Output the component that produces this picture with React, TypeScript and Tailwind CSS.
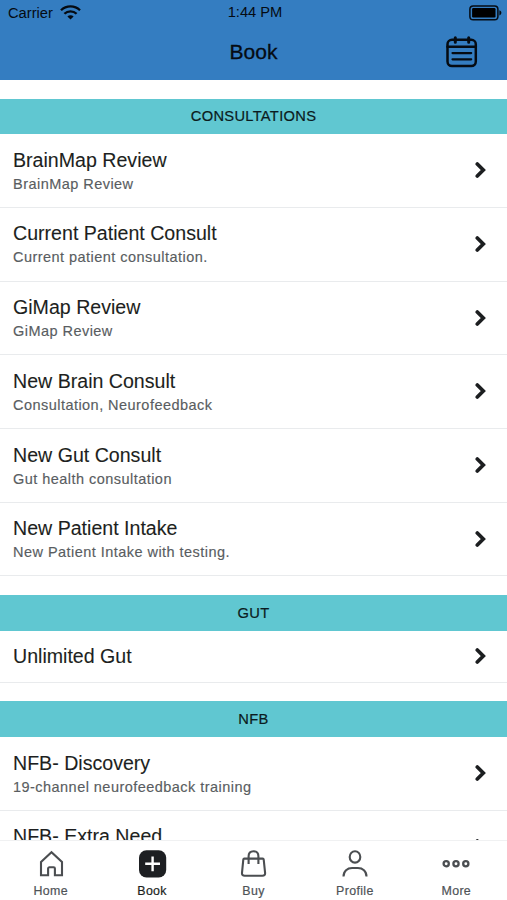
import type { ReactNode } from 'react';

type Item = { title: string; detail?: string; tall?: boolean };
type Section = { name: string; items: Item[] };

const sections: Section[] = [
  {
    name: 'CONSULTATIONS',
    items: [
      { title: 'BrainMap Review', detail: 'BrainMap Review' },
      { title: 'Current Patient Consult', detail: 'Current patient consultation.' },
      { title: 'GiMap Review', detail: 'GiMap Review' },
      { title: 'New Brain Consult', detail: 'Consultation, Neurofeedback' },
      { title: 'New Gut Consult', detail: 'Gut health consultation' },
      { title: 'New Patient Intake', detail: 'New Patient Intake with testing.' },
    ],
  },
  { name: 'GUT', items: [{ title: 'Unlimited Gut' }] },
  {
    name: 'NFB',
    items: [
      { title: 'NFB- Discovery', detail: '19-channel neurofeedback training' },
      { title: 'NFB- Extra Need', tall: true },
    ],
  },
];

function Wifi() {
  return (
    <svg width="21" height="15" viewBox="0 0 21 15" fill="none" stroke="#050b12" strokeWidth="2.3">
      <path d="M1 5.2a13.6 13.6 0 0 1 19 0" />
      <path d="M4.4 8.8a8.7 8.7 0 0 1 12.2 0" />
      <path d="M10.5 14.6 7.4 11.6a4.3 4.3 0 0 1 6.2 0z" fill="#050b12" stroke="none" />
    </svg>
  );
}

function Battery() {
  return (
    <svg width="33" height="16" viewBox="0 0 33 16" fill="none">
      <rect x="0.9" y="0.9" width="28" height="13.8" rx="3.3" stroke="#050b12" strokeWidth="1.5" />
      <rect x="3.1" y="3.1" width="23.4" height="9.4" rx="1.2" fill="#000" />
      <path d="M30.4 5.2c1.3.4 2 1.4 2 2.6s-.7 2.2-2 2.6z" fill="#050b12" />
    </svg>
  );
}

function Calendar() {
  return (
    <svg width="32" height="32" viewBox="0 0 32 32" fill="none" stroke="#050b12" strokeWidth="2.5" strokeLinecap="round">
      <rect x="1.5" y="3.8" width="28.3" height="26.3" rx="4.5" />
      <path d="M1.5 10.8h28.3" />
      <path d="M9.3 1.7v4.6M22.7 1.7v4.6" strokeWidth="3" />
      <path d="M6.5 17.1h18.7M6.5 23.3h18.7" strokeWidth="2.2" />
    </svg>
  );
}

function Chevron() {
  return (
    <svg width="12" height="18" viewBox="0 0 12 18" fill="none" stroke="#1c1e20" strokeWidth="3.7" strokeLinecap="round" strokeLinejoin="miter">
      <path d="M2.3 3 8.3 9l-6 6" />
    </svg>
  );
}

function TabIcon({ children }: { children: ReactNode }) {
  return (
    <svg width="30" height="30" viewBox="0 0 30 30" fill="none" stroke="#4b4e51" strokeWidth="2.1">
      {children}
    </svg>
  );
}

const tabs: { label: string; active?: boolean; icon: ReactNode }[] = [
  {
    label: 'Home',
    icon: <path d="M5 12.9 15.5 3.2 26 12.9v13.4h-7.1v-6.7a1.3 1.3 0 0 0-1.3-1.3h-4.2a1.3 1.3 0 0 0-1.3 1.3v6.7H5z" />,
  },
  {
    label: 'Book',
    active: true,
    icon: (
      <>
        <rect x="2" y="1.2" width="27.2" height="27.2" rx="7.5" fill="#1d1f22" stroke="none" />
        <path d="M15.6 7.4v14.8M8.2 14.8h14.8" stroke="#fff" strokeWidth="2.4" />
      </>
    ),
  },
  {
    label: 'Buy',
    icon: (
      <>
        <path d="M6.3 9.6h18.4q.9 0 1 .9l1.4 13.3q.2 2.9-2.7 2.9H6.7q-2.9 0-2.7-2.9l1.3-13.3q.1-.9 1-.9z" />
        <path d="M10.6 15V7.2c0-3.2 1.9-5 4.9-5s4.9 1.8 4.9 5V15" />
      </>
    ),
  },
  {
    label: 'Profile',
    icon: (
      <>
        <ellipse cx="15" cy="7.9" rx="5.3" ry="5.7" />
        <path d="M3.5 27.6c0-5.6 3.9-8.6 8.6-8.6h5.8c4.7 0 8.6 3 8.6 8.6" />
      </>
    ),
  },
  {
    label: 'More',
    icon: (
      <g strokeWidth="2.3">
        <circle cx="5.2" cy="14.7" r="2.6" />
        <circle cx="15" cy="14.7" r="2.6" />
        <circle cx="24.8" cy="14.7" r="2.6" />
      </g>
    ),
  },
];

export default function App() {
  return (
    <div className="flex h-[900px] w-[507px] flex-col overflow-hidden bg-white font-['Liberation_Sans',Arial,sans-serif] text-[#1d1f21]">
      <header className="h-[80px] shrink-0 bg-[#347dc1] text-[#050b12]">
        <div className="grid h-[25px] grid-cols-3 items-center pl-[8px] pr-[5px] text-[14.7px] leading-none">
          <div className="flex items-center gap-[7px]">
            <span className="pt-px">Carrier</span>
            <Wifi />
          </div>
          <span className="text-center">1:44 PM</span>
          <div className="flex justify-end">
            <Battery />
          </div>
        </div>
        <div className="grid h-[55px] grid-cols-3 items-center pr-[29px] pb-[2px] pl-[29px]">
          <h1 className="col-start-2 text-center text-[21px] leading-none [-webkit-text-stroke:0.3px]">Book</h1>
          <div className="flex justify-end">
            <Calendar />
          </div>
        </div>
      </header>

      <main className="min-h-0 flex-1 overflow-hidden">
        {sections.map((section) => (
          <section key={section.name} className="pt-[18.5px]">
            <h2 className="flex h-[35.8px] items-center justify-center bg-[#60c7d1] text-[14.7px] tracking-[0.3px] text-[#0b1b20] [-webkit-text-stroke:0.2px]">
              {section.name}
            </h2>
            {section.items.map((item) => (
              <div
                key={item.title}
                className={`flex justify-between border-b border-[#e9ebed] pr-[20px] pl-[13px] ${
                  item.detail || item.tall ? 'h-[73.7px] pt-[12.5px]' : 'h-[52px] pt-[12.5px]'
                }`}
              >
                <div className="flex flex-col">
                  <span className="text-[19.6px] leading-[26px] [-webkit-text-stroke:0.1px]">{item.title}</span>
                  {item.detail && (
                    <span className="text-[14.5px] leading-[23px] tracking-[0.46px] text-[#595d61] [-webkit-text-stroke:0.15px]">
                      {item.detail}
                    </span>
                  )}
                </div>
                <div className={item.detail || item.tall ? 'pt-[14.5px]' : 'pt-[3.5px]'}>
                  <Chevron />
                </div>
              </div>
            ))}
          </section>
        ))}
      </main>

      <nav className="grid h-[60px] shrink-0 grid-cols-5 border-t border-[#f0f1f2] bg-white">
        {tabs.map((tab) => (
          <div key={tab.label} className="flex flex-col items-center pt-[8px]">
            <TabIcon>{tab.icon}</TabIcon>
            <span
              className={`mt-[5px] text-[12.4px] leading-[14px] tracking-[0.35px] [-webkit-text-stroke:0.2px] ${
                tab.active ? 'text-[#1d1f21]' : 'text-[#4f5357]'
              }`}
            >
              {tab.label}
            </span>
          </div>
        ))}
      </nav>
    </div>
  );
}
